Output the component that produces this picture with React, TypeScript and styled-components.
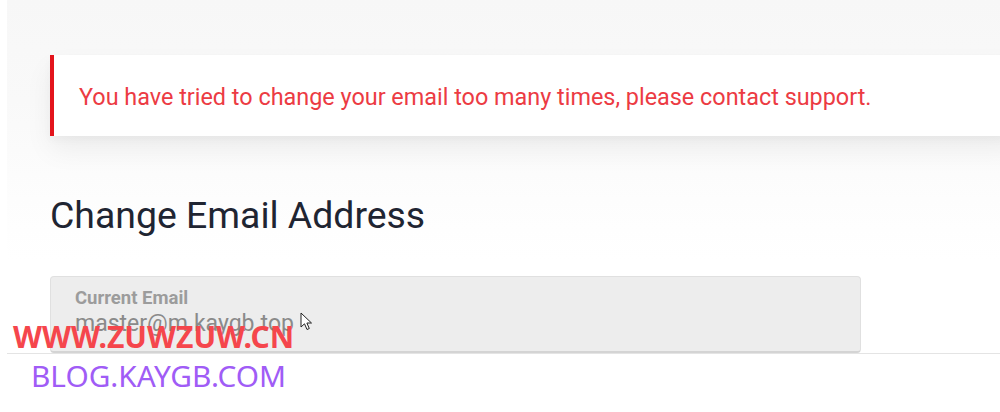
import React from "react";
import styled, { createGlobalStyle } from "styled-components";

const Global = createGlobalStyle`
  html, body { margin: 0; padding: 0; background: #ffffff; }
  body { width: 1000px; height: 412px; overflow: hidden; font-family: Roboto, "Liberation Sans", sans-serif; }
`;

const Page = styled.div`
  position: relative;
  width: 1000px;
  height: 412px;
  padding-left: 7px;
  box-sizing: border-box;
  background: #ffffff;
`;

const Panel = styled.div`
  height: 354px;
  box-sizing: border-box;
  border-bottom: 1px solid #e4e4e4;
  background: linear-gradient(#f7f7f7 0px, #f9f9f9 100px, #fdfdfd 200px, #ffffff 260px);
  padding: 55px 0 0 43px;
  overflow: hidden;
  display: flex;
  flex-direction: column;
`;

const Alert = styled.div`
  height: 81px;
  margin-right: -20px;
  box-sizing: border-box;
  background: #ffffff;
  border-left: 4px solid #e3141c;
  box-shadow: 0 14px 28px rgba(0, 0, 0, 0.06), 0 4px 8px rgba(0, 0, 0, 0.03);
  display: flex;
  align-items: center;
  padding: 2px 0 0 25px;
  color: #ec3b43;
  font-size: 23.4px;
`;

const Heading = styled.h1`
  margin: 55px 0 0 0;
  font-weight: 400;
  font-size: 37.4px;
  line-height: 48px;
  color: #1f2532;
`;

const Field = styled.div`
  margin-top: 37px;
  width: 811px;
  height: 77px;
  box-sizing: border-box;
  background: #ededed;
  border: 1px solid #e0e0e0;
  border-bottom: 2px solid #d4d4d4;
  border-radius: 4px;
  padding: 10px 0 0 24px;
  display: flex;
  flex-direction: column;
  position: relative;
`;

const Label = styled.div`
  font-size: 18.5px;
  font-weight: 700;
  color: #9c9c9c;
  line-height: 22px;
`;

const Value = styled.div`
  font-size: 23px;
  color: #8a8a8a;
  line-height: 30px;
`;

const Cursor = styled.svg`
  position: absolute;
  left: 249px;
  top: 35px;
`;

const Watermark = styled.div`
  position: absolute;
  left: 0;
  top: 317px;
  display: flex;
  flex-direction: column;
  font-family: "Noto Sans", "Open Sans", sans-serif;
  pointer-events: none;
`;

const MarkRed = styled.div`
  margin-left: 13px;
  font-weight: 700;
  font-size: 30px;
  line-height: 40px;
  color: #f5464c;
`;

const MarkPurple = styled.div`
  margin-left: 31px;
  font-weight: 400;
  font-size: 29.8px;
  line-height: 38px;
  color: #a05cf6;
`;

export default function App() {
  return (
    <>
      <Global />
      <Page>
        <Panel>
          <Alert>You have tried to change your email too many times, please contact support.</Alert>
          <Heading>Change Email Address</Heading>
          <Field>
            <Label>Current Email</Label>
            <Value>master@m.kaygb.top</Value>
            <Cursor width="14" height="20" viewBox="0 0 14 20">
              <path d="M1 1 L1 15 L4.5 11.8 L7 17.5 L9.3 16.5 L6.9 11 L11.5 11 Z" fill="#ffffff" stroke="#222" strokeWidth="1" strokeLinejoin="round" />
            </Cursor>
          </Field>
        </Panel>
        <Watermark>
          <MarkRed>WWW.ZUWZUW.CN</MarkRed>
          <MarkPurple>BLOG.KAYGB.COM</MarkPurple>
        </Watermark>
      </Page>
    </>
  );
}
